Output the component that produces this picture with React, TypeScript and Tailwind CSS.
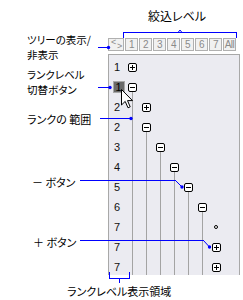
import React from "react";

type Cell = "" | "line" | "plus" | "minus" | "minusLine" | "dot";

const rows: { n: string; sel?: boolean; cells: Cell[] }[] = [
  { n: "1", cells: ["plus"] },
  { n: "1", sel: true, cells: ["minusLine"] },
  { n: "2", cells: ["line", "plus"] },
  { n: "2", cells: ["line", "minusLine"] },
  { n: "3", cells: ["line", "line", "minusLine"] },
  { n: "4", cells: ["line", "line", "line", "minusLine"] },
  { n: "5", cells: ["line", "line", "line", "line", "minusLine"] },
  { n: "6", cells: ["line", "line", "line", "line", "line", "minusLine"] },
  { n: "7", cells: ["line", "line", "line", "line", "line", "line", "dot"] },
  { n: "7", cells: ["line", "line", "line", "line", "line", "line", "plus"] },
  { n: "7", cells: ["line", "line", "line", "line", "line", "line", "plus"] },
];

function Box({ plus }: { plus: boolean }) {
  return (
    <svg width="9" height="9" viewBox="0 0 9 9" className="block">
      <rect x="0.5" y="0.5" width="8" height="8" rx="1.5" fill="#fff" stroke="#000" />
      <line x1="2" y1="4.5" x2="7" y2="4.5" stroke="#000" />
      {plus && <line x1="4.5" y1="2" x2="4.5" y2="7" stroke="#000" />}
    </svg>
  );
}

function TreeCell({ c }: { c: Cell }) {
  return (
    <div className="w-[14px] h-full flex flex-col shrink-0">
      {c === "line" && <div className="ml-[7px] w-px flex-1 bg-[#a3a3a3]" />}
      {(c === "plus" || c === "minus" || c === "minusLine") && (
        <>
          <div className="ml-[3px] mt-[6px] w-[9px] h-[9px]">
            <Box plus={c === "plus"} />
          </div>
          {c === "minusLine" && <div className="ml-[7px] w-px flex-1 bg-[#a3a3a3]" />}
        </>
      )}
      {c === "dot" && (
        <div className="ml-[5px] mt-[8px] w-[4px] h-[4px] rounded-full border border-black bg-white" />
      )}
    </div>
  );
}

const jp =
  "font-['Noto_Sans_CJK_JP',sans-serif] [font-feature-settings:'palt'] text-black whitespace-nowrap";

export default function App() {
  const btn =
    "h-[13px] border border-[#b0b0b0] bg-[#f1f1f1] text-[#8a8a8a] text-[10px] leading-[11px] flex items-center justify-center font-['Liberation_Sans',sans-serif]";
  return (
    <div className="relative w-[243px] h-[300px] bg-white overflow-hidden">
      <div className="ml-[108px] pt-[38px] w-[132px]">
        {/* toolbar */}
        <div className="flex gap-[1px]">
          <div className={`${btn} w-[16px] relative overflow-hidden`}>
            <span className="absolute left-[2px] top-[-1px] text-[9px] leading-[9px]">&lt;</span>
            <span className="absolute left-[8px] top-[3px] text-[9px] leading-[9px]">&gt;</span>
          </div>
          {["1", "2", "3", "4", "5", "6", "7", "All"].map((t) => (
            <div key={t} className={`${btn} w-[13px] tracking-[-0.5px]`}>
              {t}
            </div>
          ))}
        </div>
        {/* panel */}
        <div className="mt-[3px] h-[221px] w-[132px] border-l border-r border-t border-[#a8a8a8] bg-[#ebebf1] overflow-hidden pt-[2px]">
          {rows.map((r, i) => (
            <div key={i} className="flex h-[20px]">
              <div className="w-[16px] shrink-0 flex items-center justify-center font-['Liberation_Sans',sans-serif] text-[11px] text-[#111]">
                {r.sel ? (
                  <span className="ml-[3px] w-[12px] h-[12px] bg-[#6a6a6a] border border-[#a8a8a8] flex items-center justify-center text-black leading-none">
                    {r.n}
                  </span>
                ) : (
                  <span>{r.n}</span>
                )}
              </div>
              {r.cells.map((c, j) => (
                <TreeCell key={j} c={c} />
              ))}
            </div>
          ))}
        </div>
      </div>

      {/* cursor */}
      <svg className="absolute left-[121px] top-[89px]" width="13" height="21" viewBox="0 0 13 21">
        <path
          d="M0.5 0.5 L0.5 16 L4.2 12.4 L7 18.8 L9.2 17.8 L6.5 11.6 L11.5 11.6 Z"
          fill="#fff"
          stroke="#000"
          strokeWidth="1"
          strokeLinejoin="miter"
        />
      </svg>

      {/* callout lines */}
      <svg className="absolute left-0 top-0 pointer-events-none" width="243" height="300" viewBox="0 0 243 300">
        <g stroke="#0000ff" strokeWidth="1" fill="none" shapeRendering="crispEdges">
          <path d="M123.5 38 V32.5 H236.5 V38" />
          <path d="M98 47.5 H108" />
          <path d="M98 87.5 H110" />
          <path d="M100 118.5 H131" />
          <path d="M80 180.5 H175.5" />
          <path d="M80 240.5 H203.5" />
          <path d="M109.5 272 V278.5 H129.5 V272" />
          <path d="M119.5 278.5 V283" />
        </g>
        <g stroke="#0000ff" strokeWidth="1" fill="none">
          <path d="M178 32.5 L180 30 L182 32.5" />
          <path d="M175.5 180.5 L181.5 186.5" />
          <path d="M203.5 240.5 L209 246.5" />
        </g>
        <g fill="#0000ff">
          <circle cx="108.5" cy="47.5" r="1.7" />
          <circle cx="110" cy="87.5" r="1.7" />
          <circle cx="131" cy="118.5" r="1.7" />
          <circle cx="182" cy="187" r="1.7" />
          <circle cx="209.5" cy="247" r="1.7" />
        </g>
      </svg>

      {/* labels */}
      <div className={`absolute left-[148px] top-[9px] text-[12px] leading-[13px] ${jp}`}>絞込レベル</div>
      <div className={`absolute left-[27px] top-[32px] text-[10.5px] leading-[15px] ${jp}`}>
        <div>ツリーの表示/</div>
        <div>非表示</div>
      </div>
      <div className={`absolute left-[27px] top-[67px] text-[10.5px] leading-[15px] ${jp}`}>
        <div>ランクレベル</div>
        <div>切替ボタン</div>
      </div>
      <div className={`absolute left-[27px] top-[113px] text-[11px] leading-[13px] ${jp}`}>ランクの 範囲</div>
      <div className={`absolute left-[32px] top-[176px] text-[11px] leading-[13px] ${jp}`}>－ ボタン</div>
      <div className={`absolute left-[33px] top-[236px] text-[11px] leading-[13px] ${jp}`}>＋ ボタン</div>
      <div className={`absolute left-[67px] top-[285px] text-[11px] leading-[13px] ${jp}`}>ランクレベル表示領域</div>
    </div>
  );
}
